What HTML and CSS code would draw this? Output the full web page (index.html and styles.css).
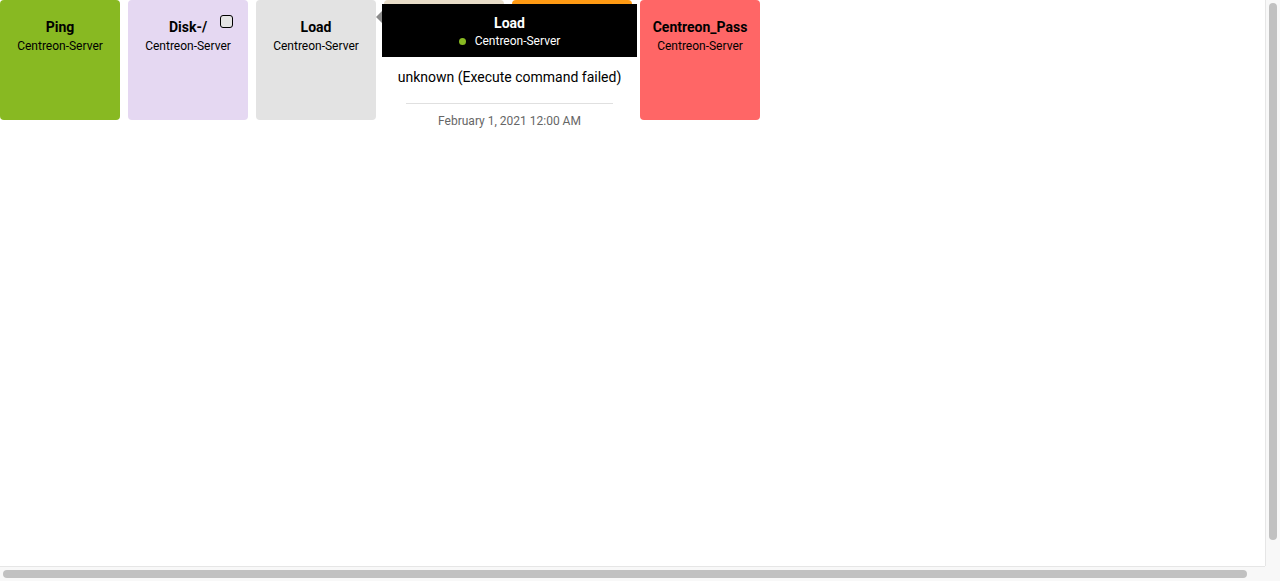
FILE: index.html
```html
<!DOCTYPE html>
<html lang="en">
<head>
<meta charset="utf-8">
<title>Status tiles</title>
<link rel="stylesheet" href="styles.css">
</head>
<body>
<div class="page">
  <div class="tiles">
    <div class="tile tile-ok">
      <div class="tile-title">Ping</div>
      <div class="tile-sub">Centreon-Server</div>
    </div>
    <div class="tile tile-pending">
      <div class="tile-title">Disk-/</div>
      <div class="tile-sub">Centreon-Server</div>
      <span class="tile-check"></span>
    </div>
    <div class="tile tile-unknown">
      <div class="tile-title">Load</div>
      <div class="tile-sub">Centreon-Server</div>
    </div>
    <div class="tile tile-ack"></div>
    <div class="tile tile-warning"></div>
    <div class="tile tile-critical">
      <div class="tile-title">Centreon_Pass</div>
      <div class="tile-sub">Centreon-Server</div>
    </div>
  </div>

  <div class="tooltip">
    <span class="tooltip-arrow"></span>
    <div class="tooltip-head">
      <div class="tooltip-title">Load</div>
      <div class="tooltip-host"><span class="dot"></span>Centreon-Server</div>
    </div>
    <div class="tooltip-body">
      <div class="tooltip-output">unknown (Execute command failed)</div>
      <div class="tooltip-divider"></div>
      <div class="tooltip-date">February 1, 2021 12:00 AM</div>
    </div>
  </div>
</div>

<div class="scrollbar scrollbar-v"><span class="thumb thumb-v"></span></div>
<div class="scrollbar scrollbar-h"><span class="thumb thumb-h"></span></div>
<div class="scroll-corner"></div>
</body>
</html>
```

FILE: styles.css
```css
html, body {
  margin: 0;
  padding: 0;
  overflow: hidden;
}

body {
  font-family: Roboto, "Liberation Sans", Arial, sans-serif;
  color: #000;
  background: #fff;
}

.page {
  position: relative;
  width: 1265px;
  height: 566px;
}

.tiles {
  display: flex;
  gap: 8px;
}

.tile {
  position: relative;
  flex: none;
  width: 120px;
  height: 120px;
  border-radius: 4px;
  box-sizing: border-box;
  padding-top: 17px;
  text-align: center;
}

.tile-title {
  font-size: 14px;
  font-weight: 700;
  line-height: 20px;
}

.tile-sub {
  font-size: 12px;
  line-height: 18px;
}

.tile-ok { background: #88b922; }
.tile-pending { background: #e5d8f2; }
.tile-unknown { background: #e3e3e3; }
.tile-ack { background: #e8dcc8; }
.tile-warning { background: #ff9a13; }
.tile-critical { background: #ff6666; }

.tile-check {
  position: absolute;
  top: 15px;
  right: 15px;
  width: 11px;
  height: 11px;
  border: 1px solid #000;
  border-radius: 3px;
  background: #e4e4e4;
}

.tooltip {
  position: absolute;
  left: 382px;
  top: 4px;
  width: 255px;
  background: #fff;
  text-align: center;
}

.tooltip-arrow {
  position: absolute;
  left: -6px;
  top: 7px;
  width: 0;
  height: 0;
  border-top: 6px solid transparent;
  border-bottom: 6px solid transparent;
  border-right: 6px solid #8c8c8c;
}

.tooltip-head {
  background: #000;
  color: #fff;
  height: 53px;
  box-sizing: border-box;
  padding-top: 9px;
}

.tooltip-title {
  font-size: 14px;
  font-weight: 700;
  line-height: 20px;
}

.tooltip-host {
  font-size: 12px;
  line-height: 16px;
  display: flex;
  justify-content: center;
  align-items: center;
  gap: 9px;
}

.dot {
  width: 7px;
  height: 7px;
  border-radius: 50%;
  background: #88b922;
}

.tooltip-body {
  padding: 9px 0 6px;
}

.tooltip-output {
  font-size: 14px;
  line-height: 22px;
  white-space: nowrap;
}

.tooltip-divider {
  height: 1px;
  background: #e0e0e0;
  margin: 15px 24px 0;
}

.tooltip-date {
  font-size: 12px;
  line-height: 16px;
  color: #666;
  margin-top: 9px;
}

/* drawn browser scrollbars */
.scrollbar {
  position: fixed;
  background: #f8f8f8;
  box-sizing: border-box;
  display: flex;
}

.scrollbar-v {
  top: 0;
  right: 0;
  width: 15px;
  height: 566px;
  border-left: 1px solid #e6e6e6;
  padding: 3px 3px 0 3px;
}

.scrollbar-h {
  left: 0;
  bottom: 0;
  height: 15px;
  width: 1265px;
  border-top: 1px solid #e6e6e6;
  padding: 3px 0 3px 3px;
}

.scroll-corner {
  position: fixed;
  right: 0;
  bottom: 0;
  width: 15px;
  height: 15px;
  background: #f8f8f8;
}

.thumb {
  display: block;
  background: #c1c1c1;
  border-radius: 5px;
}

.thumb-v {
  width: 9px;
  height: 537px;
}

.thumb-h {
  height: 8px;
  width: 1244px;
}
```
